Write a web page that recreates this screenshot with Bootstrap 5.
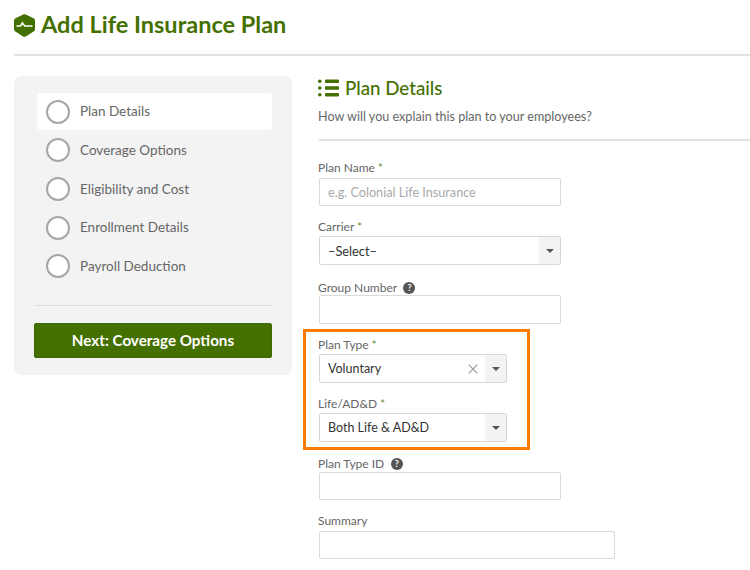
<!DOCTYPE html>
<html lang="en">
<head>
<meta charset="utf-8">
<title>Add Life Insurance Plan</title>
<link href="https://cdn.jsdelivr.net/npm/bootstrap@5.3.0/dist/css/bootstrap.min.css" rel="stylesheet">
<style>
html,body{height:570px;overflow:hidden}
body{font-family:Lato,"Open Sans",sans-serif;color:#555;background:#fff}
.page-head{padding:7px 0 0 14px}
.page-title{font-size:23.5px;line-height:34px;font-weight:700;color:#447000;margin:0;height:34px}
.page-title svg{margin-right:6px;margin-top:2px;flex:none}
.head-rule{height:2px;background:#e3e3e3;margin-top:13px}
.page-body{padding:20px 0 0 14px;gap:27px}
.side-panel{width:278px;height:299px;flex:none;background:#f3f3f3;border-radius:8px;padding:17px 20px 0}
.step-item{height:37px;margin-bottom:1.7px;padding-left:9px;color:#666;font-size:13.5px;border-radius:4px;margin-left:3px}
.step-item.is-current{background:#fff}
.step-ring{width:24px;height:24px;border:2px solid #a6a6a6;border-radius:50%;background:#fff;flex:none;margin-right:10px}
.side-rule{height:1px;background:#ddd;margin:20px 0 17px}
.next-btn{height:35px;width:100%;background:#447000;border:1px solid #3f6800;border-radius:2px;color:#fff;font-weight:700;font-size:15.2px;padding:0;line-height:1}
.next-btn:hover{background:#447000;color:#fff}
.main-col{flex:1;min-width:0}
.sec-title{font-size:18.7px;line-height:24px;color:#447000;margin:0 0 0 -1px}
.sec-title svg{margin-right:6px;flex:none}
.sec-sub{font-size:12.6px;line-height:18px;color:#666;margin:8px 0 0 -1px}
.sec-rule{height:2px;background:#e3e3e3;margin:13px 0 19px}
.fld-label{font-size:12px;line-height:16px;color:#666;margin:0 0 2px -1px;display:block;height:16px}
.lbl-tight{margin-bottom:0}
.lbl-one{margin-bottom:1px}
.lbl-low{height:15px}
.req{color:#5b8a1e;font-size:11px}
.fld-input{height:28px;width:242px;border:1px solid #dadada;border-radius:2px;padding:0 8px;font-size:12.65px;color:#333;background:#fff;display:block}
.fld-input.tall{height:29px}
.fld-input::placeholder{color:#a8a8a8;opacity:1}
.fld-wide{width:296px}
.fld-group{margin-bottom:13px}
.fld-group.after-select{margin-bottom:15px}
.fld-group.before-box{margin-bottom:5px}
.fake-select{height:29px;width:242px;border:1px solid #d8d8d8;border-radius:2px;background:#fff;font-size:12.5px;color:#333}
.fake-select.short{width:188px}
.sel-text{flex:1;padding:1px 0 0 8px}
.sel-text.dash-text{padding-top:3px;font-size:12.8px}
.sel-x{margin-right:7px}
.sel-caret{width:21px;height:100%;background:#f3f3f3;flex:none}
.sel-caret i{display:block;border-left:4px solid transparent;border-right:4px solid transparent;border-top:4px solid #555}
.help-dot{width:12px;height:12px;border-radius:50%;background:#555;color:#fff;font-size:9px;line-height:12px;text-align:center;font-weight:700;display:inline-block;margin-left:3.5px;vertical-align:1px}
.call-out{border:3px solid #f97c00;width:227px;margin-left:-16px;padding:5px 12px 5px 13px;margin-bottom:6px}
.call-out .fld-label{margin-bottom:1px}
.call-out .fld-group{margin-bottom:13px}
.call-out .fld-group:last-child{margin-bottom:0}
</style>
</head>
<body>
<header class="page-head">
  <h1 class="page-title d-flex align-items-center">
    <svg width="21" height="23" viewBox="0 0 21 23" aria-hidden="true"><path d="M9.300.5 1.500 4.300C.6 4.800 0 5.600 0 6.600v8.600c0 1 .5 1.800 1.400 2.400l7.700 4.800c.9.500 1.900.5 2.800 0l7.700-4.800c.9-.6 1.400-1.400 1.400-2.400V6.600c0-1-.6-1.800-1.500-2.300L11.700.5c-.8-.4-1.600-.4-2.400 0Z" fill="#447000"/><path d="M2.500 12H6.500L8.300 8.800 10.700 12H18.500" fill="none" stroke="#fff" stroke-width="1.500"/></svg>
    Add Life Insurance Plan
  </h1>
  <div class="head-rule"></div>
</header>
<div class="page-body d-flex">
  <aside class="side-panel">
    <div class="step-item is-current d-flex align-items-center">
      <span class="step-ring"></span><span>Plan Details</span>
    </div>
    <div class="step-item d-flex align-items-center"><span class="step-ring"></span><span>Coverage Options</span></div>
    <div class="step-item d-flex align-items-center"><span class="step-ring"></span><span>Eligibility and Cost</span></div>
    <div class="step-item d-flex align-items-center"><span class="step-ring"></span><span>Enrollment Details</span></div>
    <div class="step-item d-flex align-items-center"><span class="step-ring"></span><span>Payroll Deduction</span></div>
    <div class="side-rule"></div>
    <button class="btn next-btn" type="button">Next: Coverage Options</button>
  </aside>
  <main class="main-col">
    <h2 class="sec-title d-flex align-items-center">
      <svg width="21" height="18" viewBox="0 0 21 18" aria-hidden="true"><g fill="#447000"><circle cx="1.800" cy="2.200" r="1.800"/><circle cx="1.800" cy="9" r="1.800"/><circle cx="1.800" cy="15.800" r="1.800"/><rect x="7" y=".4" width="14" height="3.600" rx="1"/><rect x="7" y="7.200" width="14" height="3.600" rx="1"/><rect x="7" y="14" width="14" height="3.600" rx="1"/></g></svg>
      Plan Details
    </h2>
    <p class="sec-sub">How will you explain this plan to your employees?</p>
    <div class="sec-rule"></div>

    <div class="fld-group">
      <label class="fld-label" for="planName">Plan Name <span class="req">*</span></label>
      <input class="fld-input" id="planName" type="text" placeholder="e.g. Colonial Life Insurance">
    </div>
    <div class="fld-group after-select">
      <span class="fld-label lbl-one">Carrier <span class="req">*</span></span>
      <div class="fake-select d-flex align-items-center"><span class="sel-text dash-text">–Select–</span><span class="sel-caret d-flex align-items-center justify-content-center"><i></i></span></div>
    </div>
    <div class="fld-group before-box">
      <label class="fld-label lbl-tight lbl-low" for="groupNo">Group Number <span class="help-dot">?</span></label>
      <input class="fld-input tall" id="groupNo" type="text">
    </div>
    <div class="call-out">
      <div class="fld-group">
        <span class="fld-label">Plan Type <span class="req">*</span></span>
        <div class="fake-select short d-flex align-items-center"><span class="sel-text">Voluntary</span><svg class="sel-x" width="10" height="10" viewBox="0 0 10 10" aria-hidden="true"><path d="M.7.7 9.300 9.300M9.300.7.7 9.300" stroke="#999" stroke-width="1.200"/></svg><span class="sel-caret d-flex align-items-center justify-content-center"><i></i></span></div>
      </div>
      <div class="fld-group">
        <span class="fld-label">Life/AD&amp;D <span class="req">*</span></span>
        <div class="fake-select short d-flex align-items-center"><span class="sel-text">Both Life &amp; AD&amp;D</span><span class="sel-caret d-flex align-items-center justify-content-center"><i></i></span></div>
      </div>
    </div>
    <div class="fld-group">
      <label class="fld-label lbl-tight" for="typeId">Plan Type ID <span class="help-dot">?</span></label>
      <input class="fld-input" id="typeId" type="text">
    </div>
    <div class="fld-group">
      <label class="fld-label" for="summary">Summary</label>
      <input class="fld-input fld-wide" id="summary" type="text">
    </div>
  </main>
</div>
<script src="https://cdn.jsdelivr.net/npm/bootstrap@5.3.0/dist/js/bootstrap.bundle.min.js"></script>
</body>
</html>
